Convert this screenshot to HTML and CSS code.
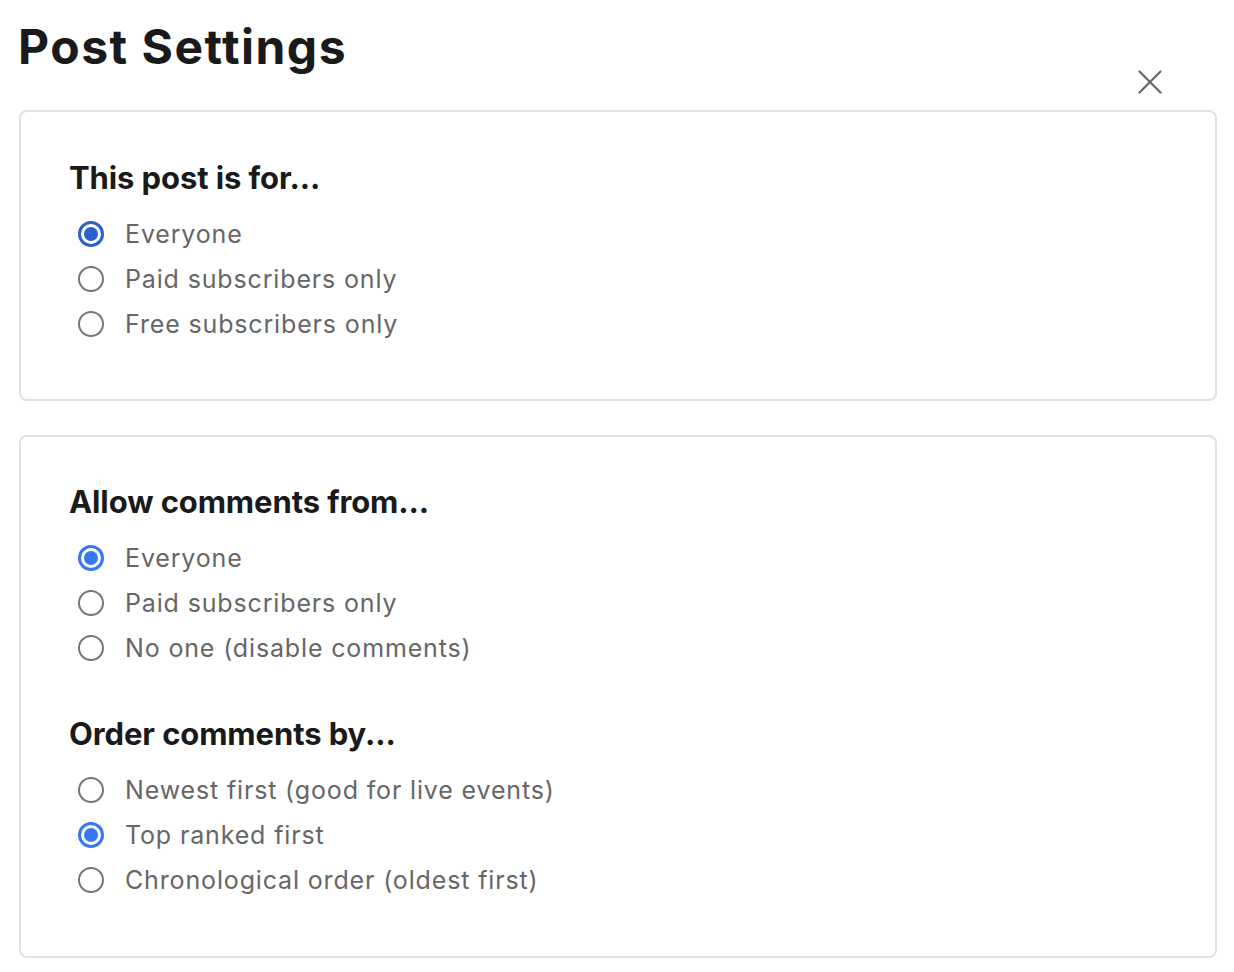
FILE: index.html
```html
<!DOCTYPE html>
<html lang="en">
<head>
<meta charset="utf-8">
<title>Post Settings</title>
<link rel="stylesheet" href="styles.css">
</head>
<body>
<div class="page">
  <header class="header">
    <h1 class="title">Post Settings</h1>
    <button class="close" aria-label="Close">
      <svg width="24" height="24" viewBox="0 0 24 24"><path d="M1.5 1.5 L22.5 22.5 M22.5 1.5 L1.5 22.5" stroke="#666" stroke-width="2.2" stroke-linecap="round" fill="none"/></svg>
    </button>
  </header>

  <section class="card">
    <h2 class="heading">This post is for...</h2>
    <ul class="options">
      <li class="option"><span class="radio checked dark"></span>Everyone</li>
      <li class="option"><span class="radio"></span>Paid subscribers only</li>
      <li class="option"><span class="radio"></span>Free subscribers only</li>
    </ul>
  </section>

  <section class="card card-comments">
    <h2 class="heading">Allow comments from...</h2>
    <ul class="options">
      <li class="option"><span class="radio checked"></span>Everyone</li>
      <li class="option"><span class="radio"></span>Paid subscribers only</li>
      <li class="option"><span class="radio"></span>No one (disable comments)</li>
    </ul>
    <h2 class="heading heading-next">Order comments by...</h2>
    <ul class="options">
      <li class="option"><span class="radio"></span>Newest first (good for live events)</li>
      <li class="option"><span class="radio checked"></span>Top ranked first</li>
      <li class="option"><span class="radio"></span>Chronological order (oldest first)</li>
    </ul>
  </section>
</div>
</body>
</html>
```

FILE: styles.css
```css
* { box-sizing: border-box; }
html, body { margin: 0; padding: 0; background: #fff; }
body {
  font-family: Inter, "Noto Sans", "Liberation Sans", sans-serif;
  color: #1a1a1a;
}
.page {
  padding: 18px 17px 0 19px;
  display: flex;
  flex-direction: column;
  gap: 34px;
}
.header {
  display: flex;
  justify-content: space-between;
  align-items: flex-end;
  margin-bottom: -34px;
}
.title {
  margin: 0 0 34px -1px;
  font-size: 48px;
  line-height: 58px;
  font-weight: 700;
  letter-spacing: 1.5px;
  color: #1a1a1a;
}
.close {
  border: 0;
  background: none;
  padding: 0;
  margin: 0 55px 16px 0;
  width: 24px;
  height: 24px;
  display: block;
  cursor: pointer;
}
.close svg { display: block; }
.card {
  border: 2px solid #e1e1e1;
  border-radius: 8px;
  padding: 48px 48px 52px 48px;
}
.card-comments { padding-top: 47px; padding-bottom: 54px; }
.heading {
  margin: 0;
  font-size: 31px;
  line-height: 36px;
  font-weight: 700;
  letter-spacing: -0.1px;
  color: #1a1a1a;
}
.heading-next { margin-top: 45.5px; }
.options {
  list-style: none;
  margin: 15.5px 0 0 0;
  padding: 0;
}
.option {
  display: flex;
  align-items: center;
  height: 45px;
  font-size: 25px;
  letter-spacing: 0.85px;
  color: #666;
  padding-left: 9px;
}
.radio {
  width: 26px;
  height: 26px;
  border-radius: 50%;
  border: 2px solid #767676;
  background: #fff;
  margin-right: 21px;
  flex: none;
  position: relative;
}
.radio.checked {
  border: 3px solid #3478f6;
}
.radio.checked::after {
  content: "";
  position: absolute;
  left: 3px;
  top: 3px;
  width: 14px;
  height: 14px;
  border-radius: 50%;
  background: #3478f6;
}
.radio.checked.dark { border-color: #2a5fcd; }
.radio.checked.dark::after { background: #2a5fcd; }
```
